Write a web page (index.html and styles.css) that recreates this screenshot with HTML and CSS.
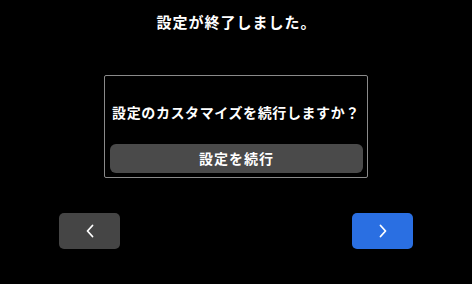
FILE: index.html
```html
<!DOCTYPE html>
<html lang="ja">
<head>
<meta charset="utf-8">
<link rel="stylesheet" href="styles.css">
</head>
<body>
<div class="screen">
  <h1 class="title">設定が終了しました。</h1>
  <div class="dialog">
    <p class="question">設定のカスタマイズを続行しますか？</p>
    <button class="continue">設定を続行</button>
  </div>
  <div class="nav">
    <button class="nav-btn back" aria-label="戻る">
      <svg width="10" height="14" viewBox="0 0 10 14"><polyline points="7.5,1.5 2.5,7 7.5,12.5" fill="none" stroke="#fff" stroke-width="1.8" stroke-linecap="round" stroke-linejoin="round"/></svg>
    </button>
    <button class="nav-btn next" aria-label="次へ">
      <svg width="10" height="14" viewBox="0 0 10 14"><polyline points="2.5,1.5 7.5,7 2.5,12.5" fill="none" stroke="#fff" stroke-width="1.8" stroke-linecap="round" stroke-linejoin="round"/></svg>
    </button>
  </div>
</div>
</body>
</html>
```
FILE: styles.css
```css
html, body {
  margin: 0;
  padding: 0;
  background: #000;
}
body {
  width: 472px;
  height: 284px;
  overflow: hidden;
  font-family: "Noto Sans CJK JP", "Noto Sans", sans-serif;
  color: #fff;
}
.screen {
  display: flex;
  flex-direction: column;
  align-items: center;
  height: 284px;
}
.title {
  margin: 12px 0 0 0;
  font-size: 15px;
  line-height: 20px;
  font-weight: 700;
  letter-spacing: 1px;
  padding-left: 1px;
}
.dialog {
  margin-top: 43px;
  width: 262px;
  height: 101px;
  border: 1px solid #8a8a8a;
  border-radius: 2px;
  display: flex;
  flex-direction: column;
  align-items: center;
  box-sizing: content-box;
}
.question {
  margin: 26px 0 0 0;
  font-size: 14px;
  line-height: 20px;
  font-weight: 700;
  letter-spacing: 0.6px;
}
.continue {
  margin-top: 22px;
  width: 253px;
  height: 29px;
  border: none;
  border-radius: 6px;
  background: #4a4a4a;
  color: #fff;
  font-family: inherit;
  font-size: 14px;
  font-weight: 700;
  letter-spacing: 1px;
  padding: 0 0 0 1px;
  line-height: 29px;
}
.nav {
  margin-top: 35px;
  width: 354px;
  display: flex;
  justify-content: space-between;
}
.nav-btn {
  width: 61px;
  height: 36px;
  border: none;
  border-radius: 5px;
  padding: 0;
  display: flex;
  align-items: center;
  justify-content: center;
}
.back { background: #454545; }
.next { background: #2a6fe2; }
```
